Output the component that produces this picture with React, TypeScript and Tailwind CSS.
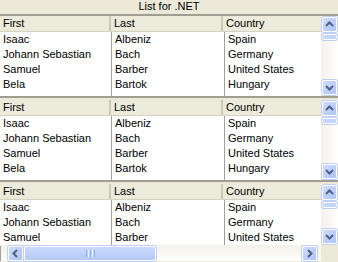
import React from 'react';

const rows = [
  ['Isaac', 'Albeniz', 'Spain'],
  ['Johann Sebastian', 'Bach', 'Germany'],
  ['Samuel', 'Barber', 'United States'],
  ['Bela', 'Bartok', 'Hungary'],
];

function Arrow({ dir }: { dir: 'up' | 'down' | 'left' | 'right' }) {
  const d = {
    up: 'M3 8 L6.5 4.5 L10 8',
    down: 'M3 5 L6.5 8.5 L10 5',
    left: 'M8 3 L4.5 6.5 L8 10',
    right: 'M5 3 L8.5 6.5 L5 10',
  }[dir];
  return (
    <svg width="13" height="13" viewBox="0 0 13 13">
      <path d={d} fill="none" stroke="#4D6185" strokeWidth="2" />
    </svg>
  );
}

function ScrollBtn({ dir }: { dir: 'up' | 'down' | 'left' | 'right' }) {
  return (
    <div className="w-[15px] h-[15px] shrink-0 rounded-[2px] border border-[#fff] bg-gradient-to-br from-[#CFDCFD] to-[#AFC4F4] flex items-center justify-center shadow-[0_0_0_1px_#C0D0F4]">
      <Arrow dir={dir} />
    </div>
  );
}

function VScroll() {
  return (
    <div className="w-[17px] shrink-0 flex flex-col items-center justify-between py-[1px] bg-gradient-to-r from-[#F3F1EA] to-[#FEFEFB]">
      <div className="flex flex-col items-center gap-[2px]">
        <ScrollBtn dir="up" />
        <div className="w-[15px] h-[6px] rounded-[2px] border border-[#fff] bg-[#C4D4FB] shadow-[0_0_0_1px_#C0D0F4]" />
      </div>
      <ScrollBtn dir="down" />
    </div>
  );
}

function HScroll() {
  return (
    <div className="h-[16px] flex items-center bg-gradient-to-b from-[#F3F1EA] to-[#FEFEFB]">
      <div className="w-[321px] flex items-center pl-[7px] pr-[4px] gap-[1px] border-l border-[#A0A0A0]">
        <ScrollBtn dir="left" />
        <div className="w-[132px] h-[15px] rounded-[2px] border border-[#fff] bg-gradient-to-b from-[#CADAFD] to-[#B5C9F6] flex items-center justify-center shadow-[0_0_0_1px_#C0D0F4]">
          <div className="flex gap-[1px]">
            <div className="w-[1px] h-[7px] bg-[#EEF4FE] border-r border-[#8CB0F8]" />
            <div className="w-[1px] h-[7px] bg-[#EEF4FE]" />
            <div className="w-[1px] h-[7px] bg-[#8CB0F8]" />
            <div className="w-[1px] h-[7px] bg-[#EEF4FE]" />
            <div className="w-[1px] h-[7px] bg-[#8CB0F8]" />
          </div>
        </div>
        <div className="flex-1" />
        <ScrollBtn dir="right" />
      </div>
      <div className="flex-1 h-full bg-[#ECE9D8]" />
    </div>
  );
}

function HeaderCell({ label, w }: { label: string; w: string }) {
  return (
    <div className={`${w} shrink-0 h-full flex items-center pl-[3px] relative`}>
      <span>{label}</span>
    </div>
  );
}

function Panel({ count, hscroll }: { count: number; hscroll?: boolean }) {
  return (
    <div className="flex flex-col">
      <div className="flex">
        <div className="w-[321px] flex flex-col">
          <div className="h-[16px] flex bg-[#EBEADB] border-b border-[#D6D2C2]">
            <HeaderCell label="First" w="w-[111px] border-r-2 border-r-[#CBC7B8]" />
            <HeaderCell label="Last" w="w-[112px] border-r-2 border-r-[#CBC7B8]" />
            <HeaderCell label="Country" w="flex-1" />
          </div>
          <div className={`${hscroll ? 'h-[45px]' : 'h-[64px]'} bg-white flex`}>
            <div className="w-[112px] border-r border-[#A0A0A0]">
              {rows.slice(0, count).map((r) => (
                <div key={r[0]} className="h-[15px] leading-[15px] pl-[3px] whitespace-nowrap">{r[0]}</div>
              ))}
            </div>
            <div className="w-[113px] border-r border-[#A0A0A0]">
              {rows.slice(0, count).map((r) => (
                <div key={r[1]} className="h-[15px] leading-[15px] pl-[3px] whitespace-nowrap">{r[1]}</div>
              ))}
            </div>
            <div className="flex-1">
              {rows.slice(0, count).map((r) => (
                <div key={r[2]} className="h-[15px] leading-[15px] pl-[3px] whitespace-nowrap">{r[2]}</div>
              ))}
            </div>
          </div>
        </div>
        <VScroll />
      </div>
      {hscroll ? <HScroll /> : <div className="h-[4px] border-t-2 border-[#A09E93] bg-[#ECE9D8]" />}
    </div>
  );
}

export default function App() {
  return (
    <div className="w-[338px] h-[262px] bg-[#ECE9D8] overflow-hidden text-[11px] text-black font-['Liberation_Sans',Arial,sans-serif]">
      <div className="h-[16px] leading-[13px] text-center border-b-2 border-[#A09E93]">List for .NET</div>
      <Panel count={4} />
      <Panel count={4} />
      <Panel count={3} hscroll />
    </div>
  );
}
